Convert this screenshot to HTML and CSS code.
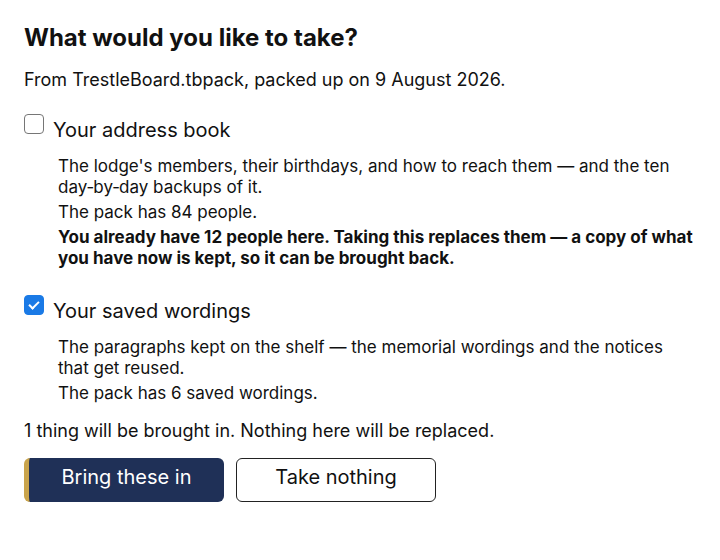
FILE: index.html
```html
<!DOCTYPE html>
<html lang="en">
  <head>
    <meta charset="UTF-8" />
    <title>Take from pack</title>
    <link rel="stylesheet" href="styles.css">
  </head>
  <body>
    <div class="takeWrapp">
      <h1 class="title">What would you like to take?</h1>
      <p class="intro">From TrestleBoard.tbpack, packed up on 9 August 2026.</p>

      <div class="choice">
        <label class="choice-label">
          <input type="checkbox" class="choice-box" />
          <span>Your address book</span>
        </label>
        <div class="choice-desc">
          <p>The lodge's members, their birthdays, and how to reach them — and the ten day&#8209;by&#8209;day backups of it.</p>
          <p>The pack has 84 people.</p>
          <p class="warn">You already have 12 people here. Taking this replaces them — a copy of what you have now is kept, so it can be brought back.</p>
        </div>
      </div>

      <div class="choice">
        <label class="choice-label">
          <input type="checkbox" class="choice-box" checked />
          <span>Your saved wordings</span>
        </label>
        <div class="choice-desc">
          <p>The paragraphs kept on the shelf — the memorial wordings and the notices that get reused.</p>
          <p>The pack has 6 saved wordings.</p>
        </div>
      </div>

      <p class="summary">1 thing will be brought in. Nothing here will be replaced.</p>

      <div class="buttons">
        <button class="btn btn-main">Bring these in</button>
        <button class="btn btn-plain">Take nothing</button>
      </div>
    </div>
  </body>
</html>
```

FILE: styles.css
```css
body {
  font-family: Inter, "Noto Sans", sans-serif;
  color: #111;
  margin: 0;
  background: #fff;
}

.takeWrapp {
  padding: 23px 24px 24px 24px;
  display: flex;
  flex-flow: column nowrap;
}

.title {
  font-size: 24px;
  font-weight: 700;
  line-height: 30px;
  margin: 0 0 15px 0;
}

.intro {
  font-size: 18px;
  line-height: 24px;
  margin: 0 0 22px 0;
}

.choice {
  margin-bottom: 10px;
}

.choice-label {
  display: flex;
  align-items: flex-start;
  gap: 9px;
  font-size: 20px;
  line-height: 26px;
}

.choice-label span {
  margin-top: 3px;
}

.choice-box {
  appearance: none;
  -webkit-appearance: none;
  position: relative;
  width: 20px;
  height: 20px;
  margin: 0;
  border: 1px solid #767676;
  border-radius: 4px;
  background-color: #fff;
}

.choice-box:checked {
  background-color: #1a7ae6;
  border-color: #1a7ae6;
}

.choice-box:checked::after {
  content: "";
  position: absolute;
  left: 6px;
  top: 3px;
  width: 4px;
  height: 8px;
  border-right: 2px solid #fff;
  border-bottom: 2px solid #fff;
  transform: rotate(45deg);
}

.choice-desc {
  padding-left: 34px;
  margin-top: 13px;
  font-size: 17px;
  line-height: 21px;
}

.choice-desc p {
  margin: 0 0 4px 0;
}

.choice-desc .warn {
  font-weight: 700;
  margin-bottom: 16px;
}

.summary {
  font-size: 18px;
  line-height: 24px;
  margin: 1px 0 15px 0;
}

.buttons {
  display: flex;
  gap: 12px;
}

.btn {
  width: 200px;
  height: 44px;
  font-family: inherit;
  font-size: 20px;
  border-radius: 6px;
  padding: 0 0 7px 0;
  cursor: pointer;
}

.btn-main {
  background-color: #1f3057;
  color: #fff;
  border: none;
  border-left: 5px solid #c9a44c;
}

.btn-plain {
  background-color: #fff;
  color: #111;
  border: 1px solid #222;
}
```
